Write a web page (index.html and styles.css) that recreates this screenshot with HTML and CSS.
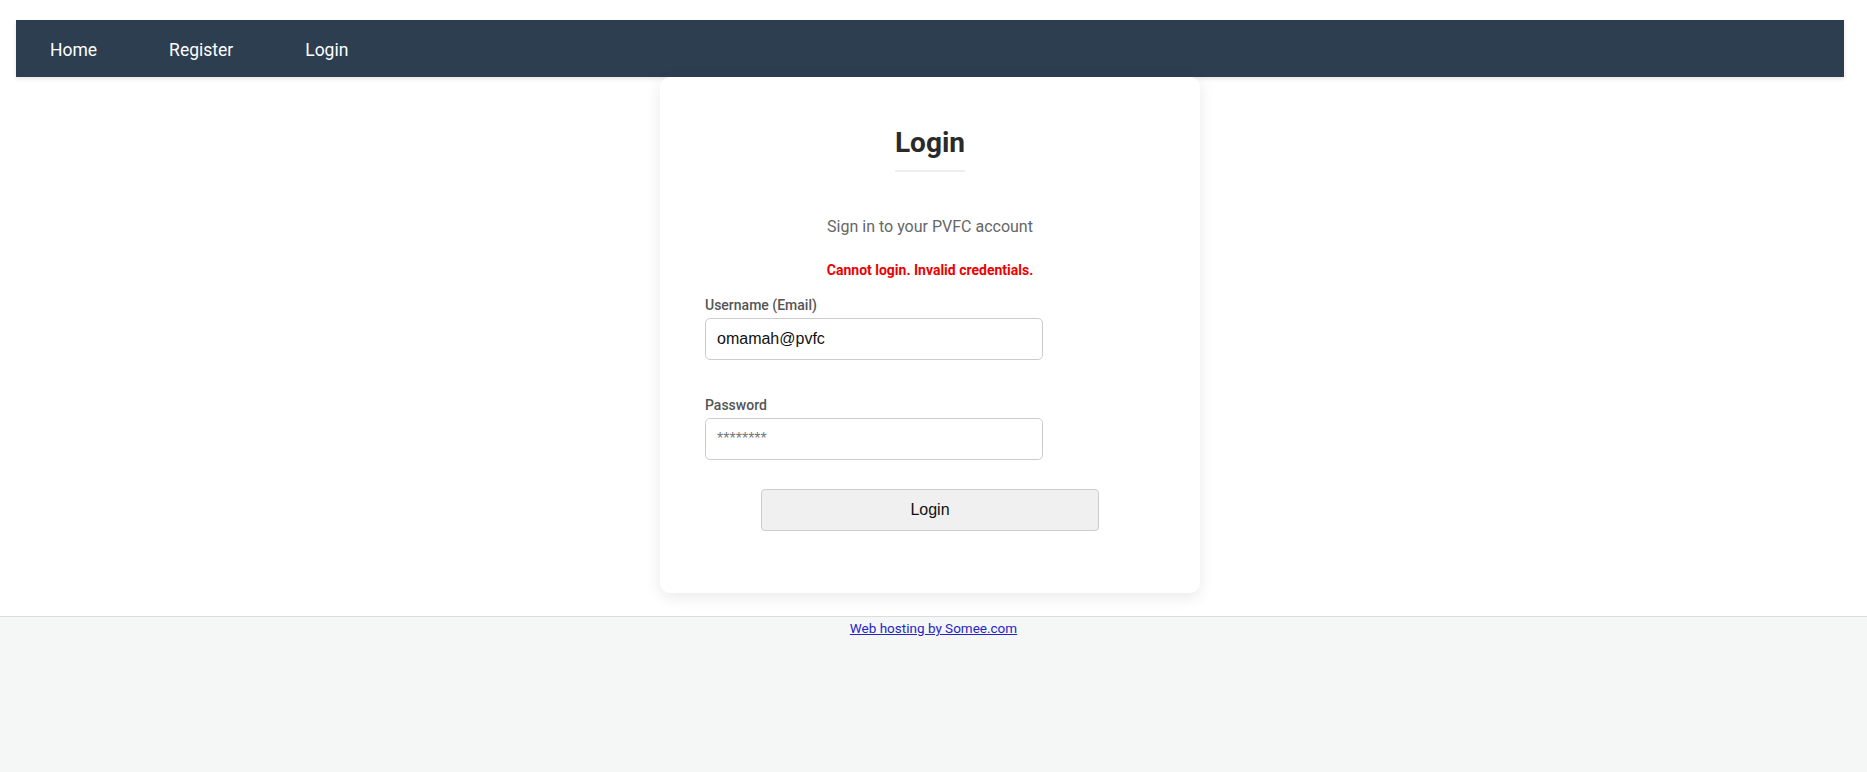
FILE: index.html
```html
<!DOCTYPE html>
<html lang="en">
<head>
  <meta charset="UTF-8">
  <meta name="viewport" content="width=device-width, initial-scale=1.0">
  <title>Login - PVFC</title>
  <link rel="stylesheet" href="styles.css">
</head>
<body>

  <div class="page">
    <nav class="navbar">
      <a href="#">Home</a>
      <a href="#">Register</a>
      <a href="#">Login</a>
    </nav>

    <div class="card">
      <h2>Login</h2>
      <p class="subtitle">Sign in to your PVFC account</p>
      <p class="error">Cannot login. Invalid credentials.</p>

      <form class="login-form">
        <label for="username">Username (Email)</label>
        <input type="text" id="username" value="omamah@pvfc">

        <label for="password" class="second">Password</label>
        <input type="password" id="password" placeholder="********">

        <button type="button">Login</button>
      </form>
    </div>
  </div>

  <footer class="footer">
    <a href="#">Web hosting by Somee.com</a>
  </footer>

</body>
</html>
```

FILE: styles.css
```css
html, body {
  margin: 0;
  padding: 0;
}
body {
  font-family: Roboto, "Open Sans", sans-serif;
  background-color: #fff;
  color: #333;
  min-height: 100vh;
  display: flex;
  flex-direction: column;
}
.page {
  margin: 20px 23px 0 16px;
}
.navbar {
  background-color: #2c3e50;
  height: 57px;
  display: flex;
  align-items: center;
  gap: 72px;
  padding-left: 34px;
  box-shadow: 0 2px 4px rgba(0, 0, 0, 0.1);
}
.navbar a {
  color: #fff;
  text-decoration: none;
  font-size: 17.5px;
  line-height: 22px;
  padding-top: 3px;
}
.card {
  width: 540px;
  box-sizing: border-box;
  margin: 0 auto 23px;
  background: #fff;
  border-radius: 10px;
  box-shadow: 0 4px 16px rgba(0, 0, 0, 0.09);
  padding: 49px 45px 62px;
  text-align: center;
}
.card h2 {
  display: inline-block;
  margin: 0;
  font-size: 28px;
  line-height: 34px;
  font-weight: 700;
  color: #2a2a2a;
  padding-bottom: 10px;
  border-bottom: 2px solid #eee;
}
.subtitle {
  margin: 45px 0 0;
  font-size: 16px;
  line-height: 20px;
  color: #666;
}
.error {
  margin: 24px 0 0;
  font-size: 14px;
  line-height: 18px;
  font-weight: 700;
  color: #e00;
}
.login-form {
  text-align: left;
  margin-top: 17px;
}
.login-form label {
  display: block;
  font-size: 14px;
  line-height: 18px;
  font-weight: 500;
  color: #555;
  margin-bottom: 4px;
}
.login-form label.second {
  margin-top: 36px;
}
.login-form input {
  display: block;
  width: 75%;
  height: 42px;
  box-sizing: border-box;
  border: 1px solid #ccc;
  border-radius: 5px;
  padding: 0 11px;
  font-family: "Liberation Sans", Arial, sans-serif;
  font-size: 16px;
  color: #111;
  background: #fff;
}
.login-form input::placeholder {
  color: #777;
}
.login-form button {
  display: block;
  width: 75%;
  height: 42px;
  margin: 29px auto 0;
  background: #f0f0f0;
  border: 1px solid #ccc;
  border-radius: 4px;
  font-family: "Liberation Sans", Arial, sans-serif;
  font-size: 16px;
  color: #111;
  cursor: pointer;
}
.footer {
  flex: 1;
  background-color: #f5f6f6;
  border-top: 1px solid #ddd;
  text-align: center;
  padding-top: 1px;
}
.footer a {
  font-size: 13.5px;
  line-height: 18px;
  color: #2424c8;
}
```
